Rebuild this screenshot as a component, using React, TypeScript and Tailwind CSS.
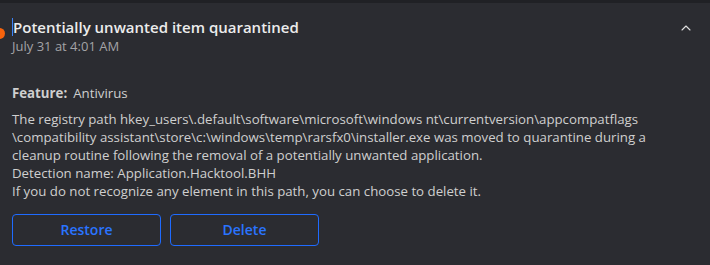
import { ChevronUp } from "lucide-react";

const lines = [
  "The registry path hkey_users\\.default\\software\\microsoft\\windows nt\\currentversion\\appcompatflags",
  "\\compatibility assistant\\store\\c:\\windows\\temp\\rarsfx0\\installer.exe was moved to quarantine during a",
  "cleanup routine following the removal of a potentially unwanted application.",
  "Detection name: Application.Hacktool.BHH",
  "If you do not recognize any element in this path, you can choose to delete it.",
];

export default function App() {
  return (
    <div
      className="h-[265px] w-[710px] overflow-hidden bg-[#2b2c31] text-[#cfcfcf]"
      style={{ fontFamily: '"Open Sans", "Noto Sans", sans-serif' }}
    >
      <div className="h-[3px] bg-[#202125]" />
      <div className="relative">
        <span className="absolute left-[-6px] top-[25px] h-[11px] w-[11px] rounded-full bg-[#f7630c]" />
        <div className="flex items-start justify-between pl-3 pr-4 pt-[14px]">
          <div>
            <div className="flex items-center">
              <span className="h-[18px] w-px bg-[#3b82f6]" />
              <h1 className="text-[15px] font-semibold leading-5 text-[#ececec]">
                Potentially unwanted item quarantined
              </h1>
            </div>
            <p className="mt-[1px] text-[13px] leading-4 text-[#a3a3a6]">July 31 at 4:01 AM</p>
          </div>
          <ChevronUp className="mt-[3px] h-4 w-4 text-[#e0e0e0]" strokeWidth={1.6} />
        </div>
      </div>

      <div className="px-3 pt-[30px] text-[13.25px] leading-[18px]">
        <p>
          <span className="font-bold">Feature:</span>
          <span className="ml-[6px]">Antivirus</span>
        </p>
        <div className="mt-[8px]">
          {lines.map((l) => (
            <div key={l} className="whitespace-nowrap">
              {l}
            </div>
          ))}
        </div>
        <div className="mt-[14px] flex gap-[9px]">
          <button className="h-8 w-[149px] rounded-[4px] border border-[#1f6bff] text-[14px] font-semibold text-[#2a74ff]">
            Restore
          </button>
          <button className="h-8 w-[149px] rounded-[4px] border border-[#1f6bff] text-[14px] font-semibold text-[#2a74ff]">
            Delete
          </button>
        </div>
      </div>
    </div>
  );
}
